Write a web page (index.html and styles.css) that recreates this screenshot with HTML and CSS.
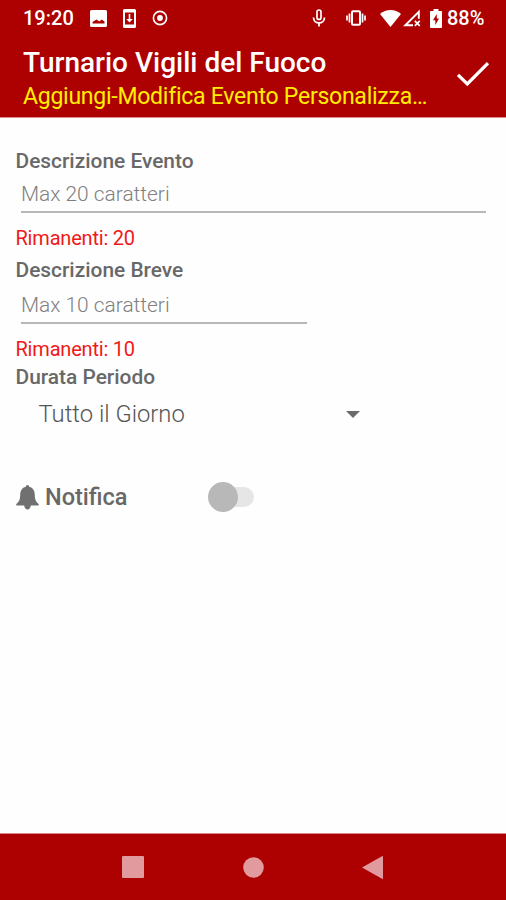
FILE: index.html
```html
<!DOCTYPE html>
<html lang="it">
<head>
<meta charset="utf-8">
<title>Turnario Vigili del Fuoco</title>
<link rel="stylesheet" href="styles.css">
</head>
<body>
<div class="screen">
  <div class="status">
    <span class="clock">19:20</span>
    <svg class="s-image" width="17" height="17" viewBox="0 0 17 17"><path fill="#fff" fill-rule="evenodd" d="M1.500 0h14q1.500 0 1.500 1.500v14q0 1.500-1.500 1.500h-14Q0 17 0 15.500v-14Q0 0 1.500 0zM2.500 13.500h12V11.500L11.500 9.500l-2 2-3-2-4 2.500z"/></svg>
    <svg class="s-update" width="13" height="19" viewBox="0 0 13 19"><path fill="#fff" fill-rule="evenodd" d="M1.500 0h10Q13 0 13 1.500v16q0 1.500-1.500 1.500h-10Q0 19 0 17.500v-16Q0 0 1.500 0zM2 3.500v12h9v-12z"/><path fill="#fff" d="M5.700 5h1.600v5h2.500L6.500 13.500 3.200 10h2.500z"/></svg>
    <svg class="s-target" width="16" height="16" viewBox="0 0 16 16"><circle cx="8" cy="8" r="6.600" fill="none" stroke="#fff" stroke-width="1.600"/><circle cx="8" cy="8" r="2.900" fill="#fff"/></svg>
    <svg class="s-mic" width="14" height="18" viewBox="0 0 14 18"><rect x="5" y="1" width="4" height="9.500" rx="2" fill="none" stroke="#fff" stroke-width="1.700"/><path d="M1.500 8.500c0 7.200 11 7.200 11 0M7 14v3.500" fill="none" stroke="#fff" stroke-width="1.800"/></svg>
    <svg class="s-vibrate" width="20" height="16" viewBox="0 0 20 16"><rect x="6" y="1.300" width="8" height="13.400" rx="1" fill="none" stroke="#fff" stroke-width="2"/><path d="M3.500 3.500v9M16.500 3.500v9M1 5.500v5M19 5.500v5" stroke="#fff" stroke-width="1.700"/></svg>
    <svg class="s-wifi" width="21" height="17" viewBox="0 0 21 17"><path fill="#fff" d="M10.500 17L0 4Q4.500 0 10.500 0T21 4z"/></svg>
    <svg class="s-signal" width="18" height="18" viewBox="0 0 18 18"><path d="M10 16.300H2.300L15.800 2.800v7" fill="none" stroke="#fff" stroke-width="1.900"/><path d="M11.800 11.800l5 5M16.800 11.800l-5 5" stroke="#fff" stroke-width="1.700"/></svg>
    <svg class="s-battery" width="12" height="19" viewBox="0 0 12 19"><path fill="#fff" fill-rule="evenodd" d="M3.500 0h5v2H11q1 0 1 1v15q0 1-1 1H1q-1 0-1-1V3q0-1 1-1h2.500zM6.800 5L3 11.200h2.300V16L9 9.500H6.800z"/></svg>
    <span class="level">88%</span>
  </div>
  <header class="bar">
    <div class="titles">
      <h1 class="title">Turnario Vigili del Fuoco</h1>
      <div class="subtitle">Aggiungi-Modifica Evento Personalizza…</div>
    </div>
    <svg class="check" width="34" height="26" viewBox="0 0 34 26"><path d="M2 13.800L11.300 23 32 2.200" fill="none" stroke="#fff" stroke-width="3.300"/></svg>
  </header>
  <main class="form">
    <div class="label">Descrizione Evento</div>
    <div class="input">Max 20 caratteri</div>
    <div class="remaining">Rimanenti: 20</div>
    <div class="label">Descrizione Breve</div>
    <div class="input input-short">Max 10 caratteri</div>
    <div class="remaining remaining-short">Rimanenti: 10</div>
    <div class="label">Durata Periodo</div>
    <div class="select"><span class="choice">Tutto il Giorno</span><svg width="14" height="7" viewBox="0 0 14 7"><path fill="#6b6b6b" d="M0 0h14L7 7z"/></svg></div>
    <div class="notify">
      <svg width="23" height="25" viewBox="0 0 24 25" preserveAspectRatio="none"><path fill="#707070" d="M12 0c1 0 1.700.7 1.700 1.800C18 2.700 19.500 6 19.600 9.500c.1 4.800 1 7.200 3.800 9.200.8.700.6 1.800-.5 1.800H15.500C15 23 13.800 24.500 12 24.500S9 23 8.500 20.500H1.100C0 20.500-.2 19.400.6 18.700c2.800-2 3.700-4.400 3.800-9.200C4.500 6 6 2.700 10.300 1.800 10.300.7 11 0 12 0z"/></svg>
      <span class="notify-text">Notifica</span>
      <span class="switch"><span class="thumb"></span></span>
    </div>
  </main>
  <nav class="nav">
    <svg width="22" height="22" viewBox="0 0 22 22"><rect width="22" height="22" rx="1" fill="#e19a9e"/></svg>
    <svg width="21" height="21" viewBox="0 0 21 21"><circle cx="10.500" cy="10.500" r="10.300" fill="#e19a9e"/></svg>
    <svg width="21" height="23" viewBox="0 0 21 23"><path d="M0 11.500L20 .2q1-.4 1 .6v21.400q0 1-1 .6z" fill="#e19a9e"/></svg>
  </nav>
</div>
</body>
</html>
```
FILE: styles.css
```css
* { box-sizing: border-box; }
body { margin: 0; font-family: Roboto, sans-serif; background: #fefefe; }
svg { display: block; flex: none; }
.screen { height: 900px; display: flex; flex-direction: column; overflow: hidden; white-space: nowrap; }

.status { height: 36px; padding-left: 23px; display: flex; align-items: center; background: #ad0000; color: #fff; font-size: 20px; font-weight: 500; }
.clock { width: 67px; }
.s-image { margin-right: 16px; }
.s-update { margin-right: 16px; }
.s-target { margin-right: 144px; }
.s-mic { margin-right: 20px; }
.s-vibrate { margin-right: 14px; }
.s-wifi { margin-right: 2px; }
.s-signal { margin-right: 9px; }
.s-battery { margin-right: 5px; }

.bar { height: 82px; padding: 10px 16px 0 23px; display: flex; justify-content: space-between; background: #ad0000; border-bottom: 1px solid #da8a8a; }
.title { margin: 0; font-size: 28px; line-height: 34px; font-weight: 500; color: #fff; }
.subtitle { font-size: 23px; line-height: 34px; letter-spacing: -.25px; color: #ffee00; }
.check { margin-top: 15px; }

.form { flex: 1; padding: 30px 16px 0 15.500px; }
.label { height: 26px; font-size: 20.900px; line-height: 26px; font-weight: 500; color: #686868; }
.input { width: 465px; height: 39px; margin-left: 5.500px; padding-top: 6px; border-bottom: 2px solid #b8b8b8; font-size: 20.900px; line-height: 28px; font-weight: 300; color: #808080; }
.input-short { width: 286px; height: 41px; padding-top: 8px; }
.remaining { height: 44px; padding-top: 11px; font-size: 20px; line-height: 28px; letter-spacing: -.2px; color: #f01818; }
.remaining-short { height: 40px; }
.select { width: 344.500px; height: 48px; padding-left: 23px; display: flex; align-items: center; justify-content: space-between; font-size: 23.800px; font-weight: 300; color: #555; }
.notify { height: 32px; margin-top: 43px; padding-left: .500px; display: flex; align-items: center; font-size: 23.500px; font-weight: 500; color: #686868; }
.notify-text { width: 163px; margin-left: 6px; }
.switch { width: 46px; height: 30px; display: flex; align-items: center; justify-content: flex-start; }
.switch::after { content: ""; width: 32px; height: 20px; margin-left: -16px; border-radius: 10px; background: #e6e6e6; }
.thumb { position: relative; z-index: 1; flex: none; width: 30px; height: 30px; border-radius: 50%; background: #b8b8b8; }

.nav { height: 67px; padding: 0 123px 0 122px; display: flex; align-items: center; justify-content: space-between; background: #ad0000; border-top: 1px solid #da8a8a; }
```
